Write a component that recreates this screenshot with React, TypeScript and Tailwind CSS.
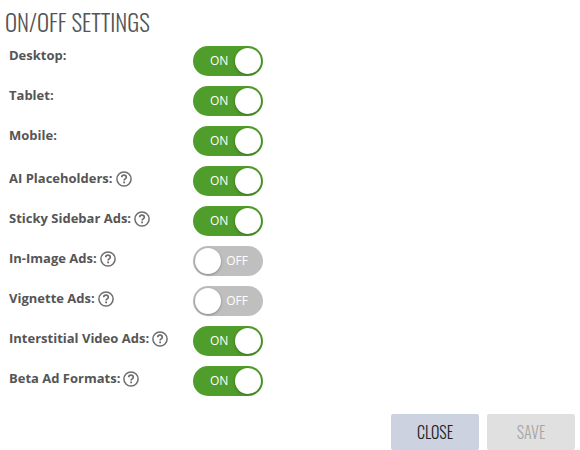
import React, { useState } from 'react';

interface Setting {
  id: string;
  label: string;
  help?: boolean;
  enabled: boolean;
}

const initialSettings: Setting[] = [
  { id: 'desktop', label: 'Desktop', enabled: true },
  { id: 'tablet', label: 'Tablet', enabled: true },
  { id: 'mobile', label: 'Mobile', enabled: true },
  { id: 'placeholders', label: 'AI Placeholders', help: true, enabled: true },
  { id: 'sidebar', label: 'Sticky Sidebar Ads', help: true, enabled: true },
  { id: 'in-image', label: 'In-Image Ads', help: true, enabled: false },
  { id: 'vignette', label: 'Vignette Ads', help: true, enabled: false },
  { id: 'interstitial', label: 'Interstitial Video Ads', help: true, enabled: true },
  { id: 'beta', label: 'Beta Ad Formats', help: true, enabled: true },
];

function HelpIcon() {
  return (
    <svg viewBox="0 0 16 16" className="size-4" fill="none" stroke="currentColor" aria-hidden="true">
      <circle cx="8" cy="8" r="7.1" strokeWidth="1.5" />
      <path d="M5.7 6.3C5.7 4.8 6.7 4.1 8 4.1s2.3.8 2.3 2.1c0 1.7-2.2 1.7-2.2 3.3" strokeWidth="1.7" />
      <path d="M8.1 10.5v1.8" strokeWidth="1.8" />
    </svg>
  );
}

interface SettingRowProps {
  setting: Setting;
  onToggle: (id: string) => void;
}

function SettingRow({ setting, onToggle }: SettingRowProps) {
  const { id, label, help, enabled } = setting;

  return (
    <div className="flex items-start">
      <div className={`flex w-46 shrink-0 items-center gap-[3px] ${help ? 'h-6.5' : 'h-5'}`}>
        <label htmlFor={id} className="text-[13px] font-bold whitespace-nowrap text-[#555]">
          {label}:
        </label>
        {help && (
          <button type="button" aria-label={`About ${label}`} className="text-[#6e6e6e]">
            <HelpIcon />
          </button>
        )}
      </div>

      {/* Toggle */}
      <label
        className={`flex h-7.5 w-17.5 cursor-pointer items-center justify-between rounded-full px-0.5 text-xs font-medium text-white ${
          enabled ? 'bg-[#4f9d2b]' : 'flex-row-reverse bg-[#bfbfbf]'
        }`}
      >
        <input
          id={id}
          type="checkbox"
          role="switch"
          checked={enabled}
          onChange={() => onToggle(id)}
          className="sr-only"
        />
        <span className={enabled ? 'pl-[15px]' : 'pr-[13px]'}>{enabled ? 'ON' : 'OFF'}</span>
        <span className="size-6.5 rounded-full bg-white shadow-[0_1px_3px_rgba(0,0,0,0.3)]" />
      </label>
    </div>
  );
}

export default function App() {
  const [settings, setSettings] = useState(initialSettings);

  const toggle = (id: string) => {
    setSettings(settings.map(s => (s.id === id ? { ...s, enabled: !s.enabled } : s)));
  };

  return (
    <main className="bg-white px-[5px] pt-1.5 font-['Open_Sans',sans-serif]">
      <h1 className="font-['Oswald','Open_Sans_Condensed','Roboto_Condensed','Roboto',sans-serif] text-[23px] leading-8 font-light text-[#555]">
        ON/OFF SETTINGS
      </h1>

      <div className="mt-2 space-y-2.5 pl-1">
        {settings.map(setting => (
          <SettingRow key={setting.id} setting={setting} onToggle={toggle} />
        ))}
      </div>

      {/* Actions */}
      <div className="mt-4.5 flex justify-end gap-2 font-['Oswald','Open_Sans_Condensed','Roboto_Condensed','Roboto',sans-serif] text-base font-light">
        <button type="button" className="h-9 w-22 rounded-xs bg-[#cdd2e1] text-[#222]">
          CLOSE
        </button>
        <button type="button" disabled className="h-9 w-22 rounded-xs bg-[#e0e0e0] text-[#a6a6a6]">
          SAVE
        </button>
      </div>
    </main>
  );
}
